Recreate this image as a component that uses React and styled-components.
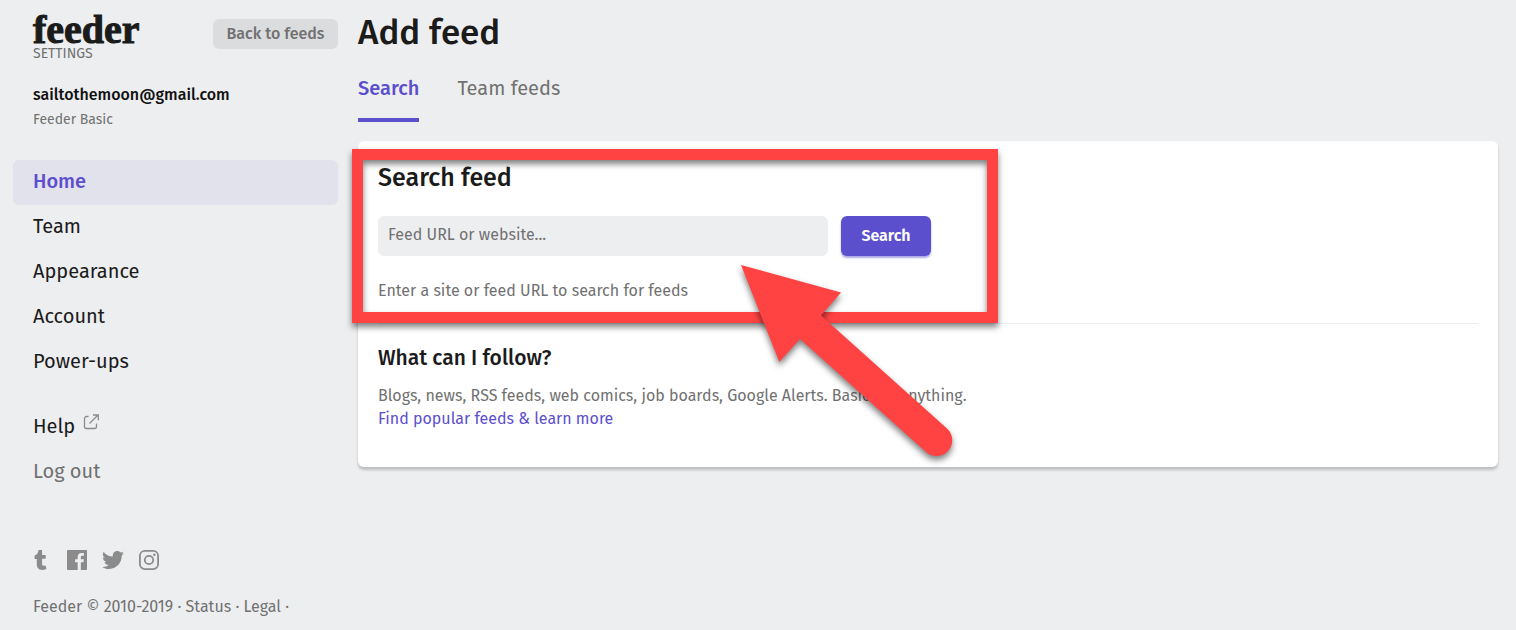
import React from 'react';
import styled, { createGlobalStyle } from 'styled-components';
import { FaTumblr, FaTwitter } from 'react-icons/fa';

const GlobalStyle = createGlobalStyle`
  * {
    box-sizing: border-box;
  }

  body {
    margin: 0;
    background: #edeef0;
    color: #1b1b1b;
    font-family: 'Fira Sans', Roboto, 'Noto Sans', sans-serif;
    font-size: 16px;
    line-height: 24px;
  }

  a {
    color: inherit;
    text-decoration: none;
  }

  h1, h2, h3, p {
    margin: 0;
    font-weight: 500;
  }
`;

const Layout = styled.div`
  display: flex;
  gap: 20px;
  min-height: 100vh;
  padding: 12px 18px 0 13px;
`;

const Sidebar = styled.aside`
  flex: 0 0 325px;
`;

const Brand = styled.header`
  display: flex;
  justify-content: space-between;
  align-items: flex-start;
  padding-left: 20px;
`;

const Logo = styled.a`
  display: block;
  color: #1b1b1b;
  font-family: 'Liberation Serif', serif;
  font-size: 40px;
  font-weight: 700;
  line-height: 36px;
  -webkit-text-stroke: 1px #1b1b1b;
`;

const Section = styled.div`
  color: #717171;
  font-size: 14px;
  line-height: 12px;
`;

const BackButton = styled.button`
  min-width: 125px;
  height: 30px;
  margin-top: 7px;
  padding: 0 12px;
  border: 0;
  border-radius: 6px;
  background: #dbdcde;
  color: #717171;
  font: inherit;
  font-weight: 500;
`;

const Account = styled.div`
  padding: 22px 20px 0;
`;

const Email = styled.p`
  color: #111111;
  line-height: 26px;
`;

const Plan = styled.p`
  color: #717171;
  font-size: 14px;
  font-weight: 400;
`;

const Menu = styled.nav`
  margin-top: ${(props) => (props.$secondary ? '20px' : '28px')};
`;

const MenuItem = styled.a`
  display: flex;
  gap: 8px;
  height: 45px;
  padding: 9px 20px;
  border-radius: 6px;
  background: ${(props) => (props.$active ? '#e2e2ec' : 'transparent')};
  && {
    color: ${(props) => (props.$active ? '#5c4fcd' : props.$muted ? '#717171' : '#1b1b1b')};
  }
  font-size: 20px;
  font-weight: ${(props) => (props.$active ? 500 : 400)};
`;

const Social = styled.div`
  display: flex;
  gap: 15px;
  margin-top: 54px;
  padding-left: 20px;
  color: #8b8b8b;

  a {
    display: flex;
    align-items: center;
    height: 22px;
  }
`;

const TumblrIcon = styled(FaTumblr)`
  width: 19px;
  height: 20px;
  padding-right: 4px;
`;

const Footer = styled.footer`
  padding: 24px 20px 12px;
  color: #717171;
`;

const Main = styled.main`
  flex: 1;
  min-width: 0;
`;

const Title = styled.h1`
  font-size: 35px;
  line-height: 40px;
`;

const Tabs = styled.nav`
  display: flex;
  gap: 38px;
  margin-top: 24px;
`;

const Tab = styled.a`
  height: 46px;
  border-bottom: 4px solid ${(props) => (props.$active ? '#5c4fcd' : 'transparent')};
  && {
    color: ${(props) => (props.$active ? '#5c4fcd' : '#717171')};
  }
  font-size: 20px;
  font-weight: ${(props) => (props.$active ? 500 : 400)};
`;

const Card = styled.section`
  position: relative;
  margin-top: 19px;
  padding: 20px 20px 37px;
  border-radius: 6px;
  background: #ffffff;
  box-shadow: 0 3px 3px rgba(0, 0, 0, 0.2);
`;

const CardTitle = styled.h2`
  font-size: 25px;
  line-height: 34px;
`;

const SearchForm = styled.form`
  display: flex;
  gap: 13px;
  margin-top: 21px;
`;

const SearchInput = styled.input`
  width: 450px;
  height: 40px;
  padding: 0 10px 3px;
  border: 0;
  border-radius: 6px;
  background: #edeef0;
  color: #1b1b1b;
  font: inherit;

  &::placeholder {
    color: #717171;
    opacity: 1;
  }
`;

const SearchButton = styled.button`
  width: 90px;
  height: 40px;
  border: 0;
  border-radius: 6px;
  background: #5c4fcd;
  box-shadow: 0 2px 2px rgba(92, 79, 205, 0.5);
  color: #ffffff;
  font: inherit;
  font-weight: 600;
`;

const Hint = styled.p`
  margin-top: 23px;
  padding-bottom: 20px;
  border-bottom: 1px solid #edeef0;
  color: #717171;
  font-weight: 400;
`;

const Subtitle = styled.h3`
  margin-top: 21px;
  font-size: 21px;
  line-height: 26px;
`;

const Text = styled.p`
  margin-top: 13px;
  color: #717171;
  font-weight: 400;
  line-height: 23px;
`;

const TextLink = styled.a`
  display: block;
  && {
    color: #5c4fcd;
  }
`;

const Highlight = styled.div`
  position: absolute;
  top: 8px;
  left: -6px;
  width: 646px;
  height: 174px;
  border: 11px solid #ff4343;
  filter: drop-shadow(0 4px 3px rgba(0, 0, 0, 0.5));
  pointer-events: none;
`;

const Arrow = styled.svg`
  position: absolute;
  top: 114px;
  left: 372px;
  filter: drop-shadow(0 4px 3px rgba(0, 0, 0, 0.5));
  pointer-events: none;
`;

const pages = ['Home', 'Team', 'Appearance', 'Account', 'Power-ups'];

const ExternalIcon = () => (
  <svg width='16' height='16' viewBox='0 0 16 16' fill='none' stroke='#8b8b8b' strokeWidth='1.3'>
    <path d='M5.5 2.5H3.5a2 2 0 0 0-2 2V12.5a2 2 0 0 0 2 2h8a2 2 0 0 0 2-2V9.5' />
    <path d='M6.5 9.5 15 1M10 1h5.3v5.3' />
  </svg>
);

const FacebookIcon = () => (
  <svg width='20' height='20' viewBox='0 0 24 24' fill='currentColor'>
    <path d='M23 0H1C.4 0 0 .4 0 1v22c0 .6.4 1 1 1h11.8v-9.3H9.7v-3.6h3.1V8.4c0-3.1 1.9-4.8 4.7-4.8 1.3 0 2.5.1 2.8.2V7h-1.9c-1.5 0-1.8.7-1.8 1.8v2.3h3.6l-.5 3.6h-3.1V24H23c.6 0 1-.4 1-1V1c0-.6-.4-1-1-1' />
  </svg>
);

const InstagramIcon = () => (
  <svg width='20' height='20' viewBox='0 0 20 20' fill='none' stroke='currentColor' strokeWidth='1.8'>
    <rect x='.9' y='.9' width='18.2' height='18.2' rx='5' />
    <circle cx='10' cy='10' r='4.2' />
    <circle cx='15.3' cy='4.7' r='1.2' fill='currentColor' stroke='none' />
  </svg>
);

function App() {
  return (
    <>
      <GlobalStyle />
      <Layout>
        <Sidebar>
          <Brand>
            <div>
              <Logo href='#'>feeder</Logo>
              <Section>SETTINGS</Section>
            </div>
            <BackButton type='button'>Back to feeds</BackButton>
          </Brand>

          <Account>
            <Email>sailtothemoon@gmail.com</Email>
            <Plan>Feeder Basic</Plan>
          </Account>

          <Menu>
            {pages.map((page) => (
              <MenuItem key={page} href='#' $active={page === 'Home'}>{page}</MenuItem>
            ))}
          </Menu>
          <Menu $secondary>
            <MenuItem href='#'>
              Help
              <ExternalIcon />
            </MenuItem>
            <MenuItem href='#' $muted>Log out</MenuItem>
          </Menu>

          <Social>
            <a href='#' aria-label='Tumblr'><TumblrIcon /></a>
            <a href='#' aria-label='Facebook'><FacebookIcon /></a>
            <a href='#' aria-label='Twitter'><FaTwitter size={22} /></a>
            <a href='#' aria-label='Instagram'><InstagramIcon /></a>
          </Social>

          <Footer>
            Feeder © 2010-2019 · <a href='#'>Status</a> · <a href='#'>Legal</a> ·
          </Footer>
        </Sidebar>

        <Main>
          <Title>Add feed</Title>
          <Tabs>
            <Tab href='#' $active>Search</Tab>
            <Tab href='#'>Team feeds</Tab>
          </Tabs>

          <Card>
            <CardTitle>Search feed</CardTitle>
            <SearchForm>
              <SearchInput type='text' placeholder='Feed URL or website...' aria-label='Feed URL or website' />
              <SearchButton type='button'>Search</SearchButton>
            </SearchForm>
            <Hint>Enter a site or feed URL to search for feeds</Hint>

            <Subtitle>What can I follow?</Subtitle>
            <Text>
              Blogs, news, RSS feeds, web comics, job boards, Google Alerts. Basically anything.
              <TextLink href='#'>Find popular feeds &amp; learn more</TextLink>
            </Text>

            <Highlight />
            <Arrow width='240' height='220' viewBox='0 0 240 220' fill='#ff4343'>
              <path d='M11 10 111 37.5 91 60.5 217 173.5A15.7 15.7 0 0 1 196 197L70 84 49.3 107Z' />
            </Arrow>
          </Card>
        </Main>
      </Layout>
    </>
  );
}

export default App;
